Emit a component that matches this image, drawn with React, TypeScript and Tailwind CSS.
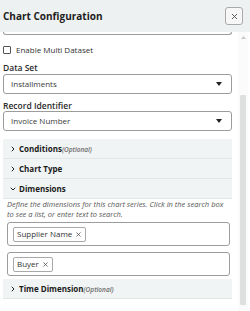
import { ChevronRight, ChevronDown, X } from 'lucide-react';

function Select({ value }: { value: string }) {
  return (
    <div className="h-[20px] border border-[#9c9c9c] rounded-[3px] flex items-center justify-between pl-[7px] pr-[9px] bg-white">
      <span className="text-[8px] text-[#3a3a3a]">{value}</span>
      <svg width="6" height="4" viewBox="0 0 6 4"><path d="M0 0h6L3 4z" fill="#222" /></svg>
    </div>
  );
}

function Section({ title, optional, open }: { title: string; optional?: boolean; open?: boolean }) {
  return (
    <div className="h-[20px] flex items-center gap-[2px] pl-[6px] bg-[#f1f4f4] border-b border-[#e2e6e6]">
      {open ? (
        <ChevronDown size={8} strokeWidth={3} className="text-[#222]" />
      ) : (
        <ChevronRight size={8} strokeWidth={3} className="text-[#222]" />
      )}
      <span className="text-[8px] font-bold text-[#1a1a1a]">
        {title}
        {optional && <span className="italic font-semibold text-[6.5px] text-[#6a6a6a]">(Optional)</span>}
      </span>
    </div>
  );
}

function Chip({ label }: { label: string }) {
  return (
    <div className="h-[24px] border border-[#9c9c9c] rounded-[3px] flex items-center px-[5px] bg-white">
      <span className="h-[15px] border border-[#a8a8a8] rounded-[2px] flex items-center gap-[3px] px-[3px] text-[8px] text-[#333]">
        {label}
        <X size={7} strokeWidth={2.5} className="text-[#444]" />
      </span>
    </div>
  );
}

export default function App() {
  return (
    <div className="w-[250px] h-[311px] bg-white overflow-hidden flex flex-col" style={{ fontFamily: '"Open Sans", "Noto Sans", sans-serif' }}>
      {/* header */}
      <div className="h-[32px] shrink-0 flex items-center justify-between pl-[3px] pr-[7px] bg-[#eef1f1]">
        <h1 className="text-[10px] font-bold text-[#1d1d1d]">Chart Configuration</h1>
        <button className="w-[18px] h-[18px] border border-[#a9a9a9] rounded-[3px] flex items-center justify-center bg-[#f7f7f7]">
          <X size={9} strokeWidth={2.5} className="text-[#555]" />
        </button>
      </div>

      <div className="flex-1 flex min-h-0">
        <div className="flex-1 pl-[3px] pr-[6px] flex flex-col">
          {/* scrolled field, bottom edge only */}
          <div className="h-[3px] border-x border-b border-[#9c9c9c] rounded-b-[3px]" />

          <label className="flex items-center gap-[5px] mt-[10px] h-[10px]">
            <span className="w-[8px] h-[8px] border border-[#555] rounded-[1px] bg-white" />
            <span className="text-[8px] text-[#333]">Enable Multi Dataset</span>
          </label>

          <div className="text-[8.5px] font-semibold text-[#2a2a2a] mt-[7px] leading-[11px]">Data Set</div>
          <div className="mt-[1px]"><Select value="Installments" /></div>

          <div className="text-[8.5px] font-semibold text-[#2a2a2a] mt-[6px] leading-[11px]">Record Identifier</div>
          <div><Select value="Invoice Number" /></div>

          <div className="mt-[8px] flex flex-col">
            <Section title="Conditions" optional />
            <Section title="Chart Type" />
            <Section title="Dimensions" open />
          </div>

          <div className="pl-[4px] pr-[2px]">
            <p className="italic text-[7.5px] leading-[9.5px] text-[#555] mt-[1px]">
              Define the dimensions for this chart series. Click in the search box to see a list, or enter text to search.
            </p>
            <div className="mt-[3px] flex flex-col gap-[6px]">
              <Chip label="Supplier Name" />
              <Chip label="Buyer" />
            </div>
          </div>

          <div className="mt-[3px]">
            <Section title="Time Dimension" optional />
          </div>
        </div>

        {/* scrollbar */}
        <div className="w-[10px] mr-[2px] flex flex-col items-center bg-[#fbfbfb]">
          <svg width="5" height="3" viewBox="0 0 5 3" className="mt-[4px]"><path d="M0 3L2.5 0 5 3z" fill="#c9c9c9" /></svg>
          <div className="mt-[56px] w-[6px] h-[210px] bg-[#dde0df] rounded-[1px]" />
        </div>
      </div>
    </div>
  );
}
